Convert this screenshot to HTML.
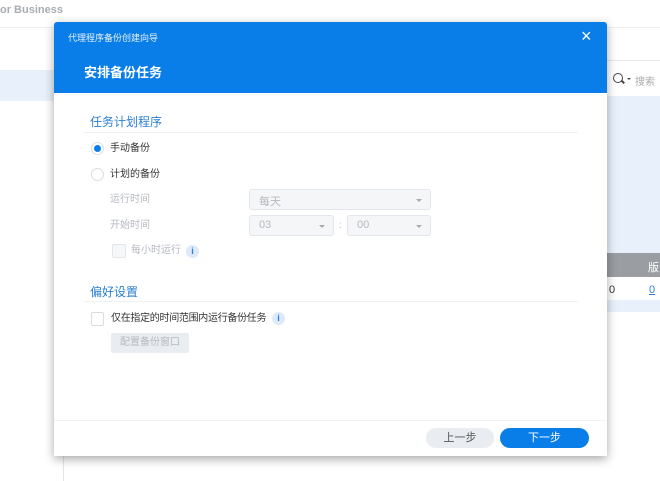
<!DOCTYPE html><html><head><style>
*{margin:0;padding:0;box-sizing:border-box}
body{width:660px;height:481px;background:#fff;position:relative;overflow:hidden;font-family:"Liberation Sans","Noto Sans CJK SC",sans-serif;}
.a{position:absolute}
.t{font-size:10px;color:#333;line-height:14px}
.dis{color:#b5b9c0}
.sel{position:absolute;height:21px;border:1px solid #e3e6ea;background:#f4f6f8;border-radius:3px;font-size:11px;color:#b5b9c0;padding:3px 9px}
.sel:after{content:"";position:absolute;right:8px;top:9px;border:3px solid transparent;border-top-color:#aaa}
.info{position:absolute;width:13px;height:13px;border-radius:50%;background:#dceafa;color:#2a7fd4;font-size:9px;font-weight:bold;text-align:center;line-height:13px}
</style></head><body>
<div class="a" style="left:0;top:4px;font-size:11px;font-weight:bold;color:#a8adb3">or Business</div>
<div class="a" style="left:0;top:27px;width:660px;height:1px;background:#eee"></div>
<div class="a" style="left:607px;top:60px;width:53px;height:1px;background:#e8e8e8"></div>
<div class="a" style="left:0;top:70px;width:54px;height:31px;background:#e8f1fb"></div>
<div class="a" style="left:613px;top:73px;width:10px;height:10px;border:1.5px solid #444;border-radius:50%"></div>
<div class="a" style="left:621px;top:81px;width:4px;height:1.5px;background:#444;transform:rotate(45deg)"></div>
<div class="a" style="left:627px;top:78px;border:2.5px solid transparent;border-top-color:#444"></div>
<div class="a" style="left:635px;top:73px;font-size:10px;color:#aaa">搜索</div>
<div class="a" style="left:607px;top:96px;width:53px;height:157px;background:#e8f1fb"></div>
<div class="a" style="left:607px;top:253px;width:53px;height:24px;background:#9a9ea3"></div>
<div class="a" style="left:648px;top:259px;font-size:11px;color:#fff">版</div>
<div class="a" style="left:609px;top:284px;font-size:11px;color:#333">0</div>
<div class="a" style="left:649px;top:284px;font-size:11px;color:#2a7fd4;text-decoration:underline">0</div>
<div class="a" style="left:607px;top:300px;width:53px;height:12px;background:#e8f1fb"></div>
<div class="a" style="left:63px;top:456px;width:1px;height:25px;background:#e5e5e5"></div>

<div class="a" style="left:54px;top:22px;width:553px;height:434px;background:#fff;box-shadow:0 3px 10px rgba(0,0,0,.35);border-radius:3px 3px 0 0;overflow:hidden">
 <div class="a" style="left:0;top:0;width:553px;height:71px;background:#0a7ee8"></div>
 <div class="a" style="left:14px;top:9px;font-size:9px;color:#e8f2fd">代理程序备份创建向导</div>
 <div class="a" style="left:527px;top:4px;font-size:18px;color:#fff">×</div>
 <div class="a" style="left:30px;top:40px;font-size:13px;font-weight:bold;color:#fff">安排备份任务</div>
 <div class="a" style="left:36px;top:91px;font-size:12px;color:#2a7fd4">任务计划程序</div>
 <div class="a" style="left:30px;top:110px;width:494px;height:1px;background:#eef0f2"></div>
 <div class="a" style="left:37px;top:120px;width:13px;height:13px;border-radius:50%;border:1px solid #d8dde3;background:#fff"></div>
 <div class="a" style="left:40px;top:123px;width:7px;height:7px;border-radius:50%;background:#0a7ee8"></div>
 <div class="a t" style="left:56px;top:120px">手动备份</div>
 <div class="a" style="left:37px;top:146px;width:13px;height:13px;border-radius:50%;border:1px solid #d8dde3"></div>
 <div class="a t" style="left:56px;top:146px">计划的备份</div>
 <div class="a t dis" style="left:56px;top:171px">运行时间</div>
 <div class="sel" style="left:195px;top:167px;width:182px">每天</div>
 <div class="a t dis" style="left:56px;top:197px">开始时间</div>
 <div class="sel" style="left:195px;top:193px;width:85px">03</div>
 <div class="a t dis" style="left:285px;top:197px">:</div>
 <div class="sel" style="left:293px;top:193px;width:84px">00</div>
 <div class="a" style="left:58px;top:222px;width:14px;height:14px;border:1px solid #e3e6ea;border-radius:2px;background:#f6f7f8"></div>
 <div class="a t dis" style="left:77px;top:222px">每小时运行</div>
 <div class="info" style="left:132px;top:223px">i</div>
 <div class="a" style="left:36px;top:261px;font-size:12px;color:#2a7fd4">偏好设置</div>
 <div class="a" style="left:30px;top:279px;width:494px;height:1px;background:#eef0f2"></div>
 <div class="a" style="left:37px;top:290px;width:13px;height:14px;border:1px solid #d8dde3;border-radius:2px"></div>
 <div class="a t" style="left:57px;top:290px;letter-spacing:-0.3px">仅在指定的时间范围内运行备份任务</div>
 <div class="info" style="left:218px;top:290px">i</div>
 <div class="a" style="left:57px;top:311px;width:78px;height:20px;background:#e9ecf0;border-radius:2px;font-size:10px;color:#b5b9c0;text-align:center;line-height:20px">配置备份窗口</div>
 <div class="a" style="left:0;top:398px;width:553px;height:1px;background:#f0f2f4"></div>
 <div class="a" style="left:372px;top:406px;width:68px;height:20px;border-radius:10px;background:#e9edf2;font-size:11px;color:#555;text-align:center;line-height:20px">上一步</div>
 <div class="a" style="left:446px;top:406px;width:89px;height:20px;border-radius:10px;background:#0a7ee8;font-size:11px;color:#fff;text-align:center;line-height:20px">下一步</div>
</div>
</body></html>
